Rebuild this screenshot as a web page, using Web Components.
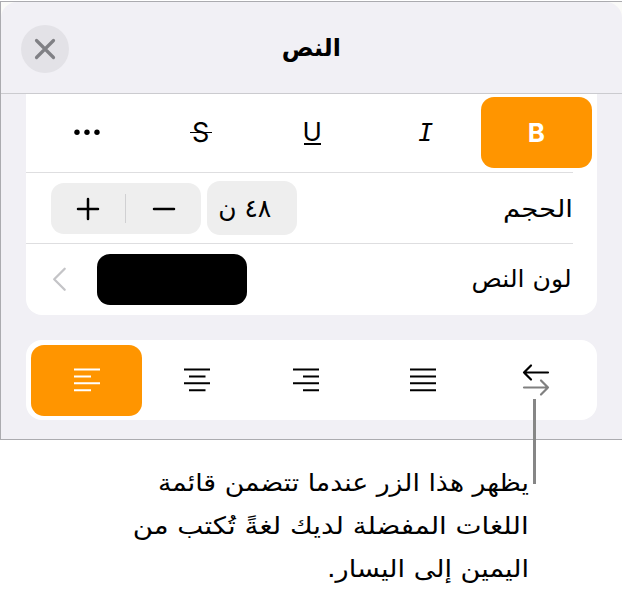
<!DOCTYPE html>
<html lang="ar" dir="rtl">
<head>
<meta charset="utf-8">
<title>النص</title>
<style>
html,body{margin:0;background:#fff;color:#000;font-family:"DejaVu Sans","Noto Sans",sans-serif}
body{width:622px;height:591px;overflow:hidden}
</style>
</head>
<body>
<text-panel></text-panel>
<callout-note></callout-note>
<script>
const define=(name,html,setup)=>customElements.define(name,class extends HTMLElement{
  connectedCallback(){
    if(this.shadowRoot)return;
    const root=this.attachShadow({mode:'open'});
    const t=document.createElement('template');
    t.innerHTML=html;
    root.append(t.content.cloneNode(true));
    if(setup)setup(this,root);
  }
});

/* One line of text, condensed or widened to the width in its "fit" attribute. */
define('fit-text',`<style>
:host{display:block;white-space:nowrap;width:max-content;line-height:1}
span{display:inline-block;transform-origin:100% 50%}
</style><span><slot></slot></span>`,(host,root)=>{
  const s=root.querySelector('span'),want=+host.getAttribute('fit');
  const natural=s.getBoundingClientRect().width;
  if(want&&natural){host.style.width=want+'px';s.style.transform='scaleX('+want/natural+')';}
});

define('tool-cell',`<style>
:host{display:flex;align-items:center;justify-content:center;height:70.5px;border-radius:13px;box-sizing:border-box}
:host([selected]){background:#ff9500;color:#fff}
::slotted(svg){display:block}
</style><slot></slot>`);

define('tool-row',`<style>
:host{display:grid;grid-template-columns:repeat(5,111.5px);justify-content:space-between;padding:0 5px}
</style><slot></slot>`);

define('settings-row',`<style>
:host{display:flex;align-items:center;justify-content:space-between;height:70px;padding:0 25px;border-top:1px solid #dedee0;border-image:linear-gradient(to left,transparent 25px,#dedee0 25px) 1}
.end{display:flex;align-items:center}
</style><slot name="label"></slot><div class="end"><slot></slot></div>`);

define('size-control',`<style>
:host{display:flex;align-items:center;gap:6px}
.value{width:90px;height:54px;border-radius:13px;background:#eee;display:flex;align-items:center;justify-content:flex-end;box-sizing:border-box;padding:1px 0 0 12px;font-size:25px}
.step{width:150px;height:51px;border-radius:13px;background:#eee;display:grid;grid-template-columns:1fr 1px 1fr;align-items:center;justify-items:center}
i{width:1px;height:29px;background:#d0d0d2;margin-left:-1px}
svg{display:block;margin-top:1px}
.step svg:first-child{margin-right:-1px}
</style>
<div class="value"><fit-text fit="53">٤٨ ن</fit-text></div>
<div class="step"><svg width="24" height="24" stroke="#000" stroke-width="2.5" stroke-linecap="round"><path d="M2 12H22"/></svg><i></i><svg width="24" height="24" stroke="#000" stroke-width="2.5" stroke-linecap="round"><path d="M2 12H22M12 2V22"/></svg></div>`);

define('color-control',`<style>
:host{display:flex;align-items:center;gap:29px}
div{width:150px;height:51px;border-radius:13px;background:#000}
svg{display:block}
</style><div></div><svg width="17" height="26" fill="none" stroke="#c4c4c7" stroke-width="2.3" stroke-linecap="round" stroke-linejoin="round"><path d="M13.7 2.7L3.2 13.2L13.7 23.7"/></svg>`);

define('panel-header',`<style>
:host{display:grid;grid-template-columns:1fr auto 1fr;align-items:center;height:91px;border-bottom:1px solid #cbcbcf}
h1{margin:0;font-size:24px;font-weight:700}
button{justify-self:end;display:grid;place-items:center;width:48px;height:48px;border:0;border-radius:50%;padding:0;background:#e3e2e7;margin:2px 0 0 20px}
</style><span></span><h1><fit-text fit="59">النص</fit-text></h1>
<button aria-label="إغلاق"><svg width="24" height="24" stroke="#808085" stroke-width="3.2" stroke-linecap="round"><path d="M3.5 3.5L20.5 20.5M20.5 3.5L3.5 20.5"/></svg></button>`);

define('align-icon',`<style>:host{display:block}svg{display:block}</style><svg width="28" height="26" stroke="currentColor" stroke-width="2"><path/></svg>`,(host,root)=>{
  const rows={left:[[1,27],[1,18],[1,27],[1,18]],center:[[1,27],[6,22.5],[1,27],[6,22.5]],right:[[1,27],[11,27],[1,27],[11,27]],full:[[1,27],[1,27],[1,27],[1,27]]}[host.getAttribute('kind')];
  root.querySelector('path').setAttribute('d',rows.map(([a,b],i)=>`M${a} ${[2.5,9.5,16.2,23.3][i]}H${b}`).join(''));
  host.style.marginRight=host.getAttribute('shift')||'0';
});

define('text-panel',`<style>
:host{display:block;box-sizing:border-box;height:439px;margin-top:1px;border:1px solid #ababaf;border-right:0;background:#fafaf8}
.sheet{height:100%;background:#f1f0f5;border-radius:16px 16px 0 0}
.card{background:#fff;width:571.5px;margin-right:25px;box-sizing:border-box}
.format{border-radius:0 0 16px 16px;height:220.5px;padding-top:3px}
.format tool-row{padding-bottom:4.5px}
.align{margin-top:25.5px;height:80px;border-radius:16px;padding-top:5px}
fit-text[slot]{font-size:24px}
.size{margin-right:-.5px;padding-top:1px}
.b{font:700 26px Inter,sans-serif}
.i{font:italic 25px "DejaVu Sans Mono",monospace;margin-left:4px}
.u{font:26px Inter,sans-serif;border-bottom:2px solid #000;line-height:23px;width:17px;display:flex;justify-content:center;margin-left:2px}
.s{font:27px Inter,sans-serif;position:relative;margin-left:4px}
.s::after{content:"";position:absolute;left:-2.5px;right:-2.5px;top:50%;height:1px;background:#000}
</style>
<div class="sheet">
<panel-header></panel-header>
<div class="card format">
<tool-row>
<tool-cell selected><span class="b">B</span></tool-cell>
<tool-cell><span class="i">I</span></tool-cell>
<tool-cell><span class="u">U</span></tool-cell>
<tool-cell><span class="s">S</span></tool-cell>
<tool-cell><svg width="30" height="8"><circle cx="6" cy="4.3" r="2.7"/><circle cx="16" cy="4.3" r="2.7"/><circle cx="26" cy="4.3" r="2.7"/></svg></tool-cell>
</tool-row>
<settings-row><fit-text slot="label" class="size" fit="70">الحجم</fit-text><size-control></size-control></settings-row>
<settings-row><fit-text slot="label" fit="100">لون النص</fit-text><color-control></color-control></settings-row>
</div>
<div class="card align">
<tool-row>
<tool-cell><svg width="28" height="34" fill="none" stroke-width="2.2" stroke-linecap="round" stroke-linejoin="round"><path stroke="#000" d="M26 9.5H2M9 2.5L2 9.5L9 16.5"/><path stroke="#808080" d="M2 24.5H26M19 17.5L26 24.5L19 31.5"/></svg></tool-cell>
<tool-cell><align-icon kind="full" shift="2px"></align-icon></tool-cell>
<tool-cell><align-icon kind="right" shift="11px"></align-icon></tool-cell>
<tool-cell><align-icon kind="center" shift="3px"></align-icon></tool-cell>
<tool-cell selected><align-icon kind="left" shift="-2px"></align-icon></tool-cell>
</tool-row>
</div>
</div>`);

define('callout-note',`<style>
:host{display:block;padding:22px 93px 0 0;position:relative}
.line{position:absolute;left:533px;top:-41px;width:3px;height:85px;background:#868686}
fit-text{font-size:24px;line-height:43px}
</style><div class="line"></div>
<fit-text fit="371">يظهر هذا الزر عندما تتضمن قائمة</fit-text>
<fit-text fit="396">اللغات المفضلة لديك لغةً تُكتب من</fit-text>
<fit-text fit="202">اليمين إلى اليسار.</fit-text>`);
</script>
</body>
</html>
